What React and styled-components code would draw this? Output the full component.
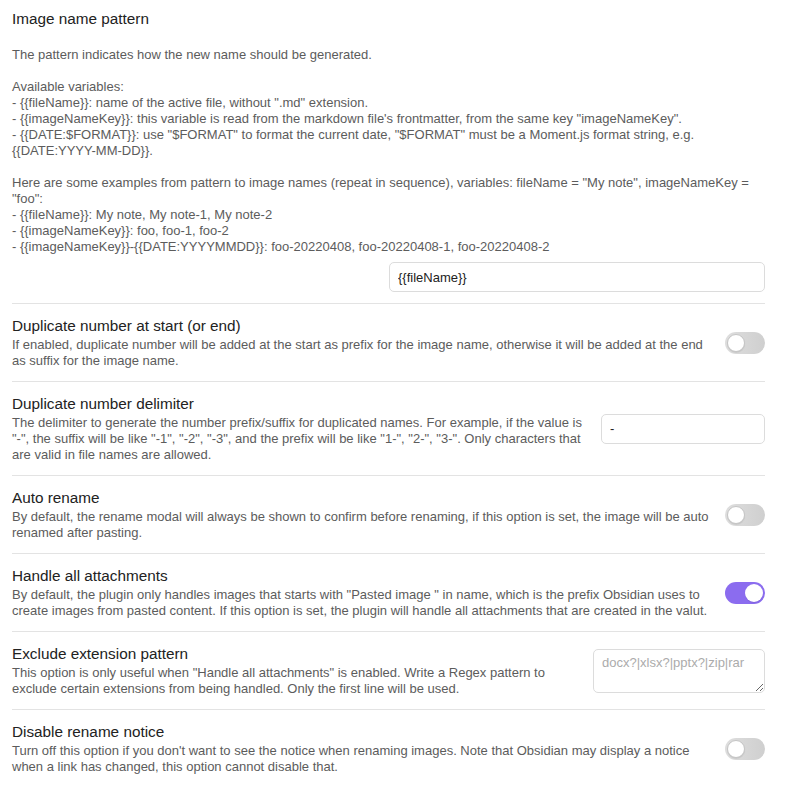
import React from 'react';
import styled, { createGlobalStyle } from 'styled-components';

const GlobalStyle = createGlobalStyle`
    body {
        margin: 0;
        background-color: #FFFFFF;
        font-family: "Liberation Sans", Arial, sans-serif;
        -webkit-font-smoothing: antialiased;
    }
`;

const SettingsPage = styled.div`
    display: flex;
    flex-direction: column;
    padding: 0 21px 0 12px;
`;

const SettingItem = styled.div`
    display: flex;
    flex-direction: ${props => props.$stacked ? 'column' : 'row'};
    align-items: ${props => props.$stacked ? 'stretch' : 'center'};
    padding: ${props => props.$stacked ? '9px 0 11px' : '12px 0'};
    border-top: ${props => props.$first ? 'none' : '1px solid #E3E3E3'};
`;

const SettingInfo = styled.div`
    flex: 1 1 auto;
    min-width: 0;
    margin-right: ${props => props.$stacked ? '0' : '16px'};
`;

const SettingName = styled.div`
    font-size: 15.3px;
    line-height: 19px;
    color: #222222;
`;

const SettingDescription = styled.div`
    padding-top: ${props => props.$stacked ? '3px' : '2px'};
    font-size: 13px;
    line-height: 16px;
    color: #5C5C5C;
    white-space: ${props => props.$stacked ? 'pre-wrap' : 'normal'};
`;

const SettingControl = styled.div`
    display: flex;
    flex-shrink: 0;
    justify-content: flex-end;
    margin-top: ${props => props.$stacked ? '7px' : '0'};
`;

const TextInput = styled.input`
    box-sizing: border-box;
    width: ${props => props.$width};
    height: 30px;
    padding: 0 8px;
    border: 1px solid #DCDCDC;
    border-radius: 5px;
    background-color: #FFFFFF;
    font-family: "Liberation Sans", Arial, sans-serif;
    font-size: 13px;
    color: #222222;
    outline: none;
`;

const TextArea = styled.textarea`
    box-sizing: border-box;
    width: 172px;
    height: 44px;
    padding: 5px 8px;
    border: 1px solid #DCDCDC;
    border-radius: 5px;
    background-color: #FFFFFF;
    font-family: "Liberation Sans", Arial, sans-serif;
    font-size: 13px;
    line-height: 16px;
    color: #222222;
    outline: none;
    resize: both;
    &::placeholder {
        color: #ABABAB;
    }
`;

const ToggleTrack = styled.div`
    position: relative;
    width: 40px;
    height: 22px;
    border-radius: 11px;
    background: ${props => props.$on ? '#8B6CEF' : 'linear-gradient(90deg, #DEDEDE, #CFCFCF)'};
    cursor: pointer;
`;

const ToggleKnob = styled.div`
    position: absolute;
    top: 2px;
    left: ${props => props.$on ? '20px' : '2px'};
    box-sizing: border-box;
    width: 18px;
    height: 18px;
    border-radius: 50%;
    background-color: #FFFFFF;
    border: ${props => props.$on ? 'none' : '1px solid #C4C4C4'};
    box-shadow: 0 1px 1px rgba(0, 0, 0, 0.08);
`;

const Toggle = ({ on = false }) => {
    return <ToggleTrack $on={on}>
        <ToggleKnob $on={on} />
    </ToggleTrack>
}

const patternDescription = `
The pattern indicates how the new name should be generated.

Available variables:
- {{fileName}}: name of the active file, without ".md" extension.
- {{imageNameKey}}: this variable is read from the markdown file's frontmatter, from the same key "imageNameKey".
- {{DATE:$FORMAT}}: use "$FORMAT" to format the current date, "$FORMAT" must be a Moment.js format string, e.g. {{DATE:YYYY-MM-DD}}.

Here are some examples from pattern to image names (repeat in sequence), variables: fileName = "My note", imageNameKey = "foo":
- {{fileName}}: My note, My note-1, My note-2
- {{imageNameKey}}: foo, foo-1, foo-2
- {{imageNameKey}}-{{DATE:YYYYMMDD}}: foo-20220408, foo-20220408-1, foo-20220408-2`;

const Setting = ({ name, description, stacked = false, first = false, children }) => {
    return <SettingItem $stacked={stacked} $first={first}>
        <SettingInfo $stacked={stacked}>
            <SettingName>{name}</SettingName>
            <SettingDescription $stacked={stacked}>{description}</SettingDescription>
        </SettingInfo>
        <SettingControl $stacked={stacked}>{children}</SettingControl>
    </SettingItem>
}

const App = () => {
    return <>
        <GlobalStyle />
        <SettingsPage>
            <Setting name="Image name pattern" description={patternDescription} stacked first>
                <TextInput $width="376px" defaultValue="{{fileName}}" />
            </Setting>
            <Setting
                name="Duplicate number at start (or end)"
                description="If enabled, duplicate number will be added at the start as prefix for the image name, otherwise it will be added at the end as suffix for the image name."
            >
                <Toggle />
            </Setting>
            <Setting
                name="Duplicate number delimiter"
                description={'The delimiter to generate the number prefix/suffix for duplicated names. For example, if the value is "-", the suffix will be like "-1", "-2", "-3", and the prefix will be like "1-", "2-", "3-". Only characters that are valid in file names are allowed.'}
            >
                <TextInput $width="164px" defaultValue="-" />
            </Setting>
            <Setting
                name="Auto rename"
                description="By default, the rename modal will always be shown to confirm before renaming, if this option is set, the image will be auto renamed after pasting."
            >
                <Toggle />
            </Setting>
            <Setting
                name="Handle all attachments"
                description={'By default, the plugin only handles images that starts with "Pasted image " in name, which is the prefix Obsidian uses to create images from pasted content. If this option is set, the plugin will handle all attachments that are created in the valut.'}
            >
                <Toggle on />
            </Setting>
            <Setting
                name="Exclude extension pattern"
                description={'This option is only useful when "Handle all attachments" is enabled. Write a Regex pattern to exclude certain extensions from being handled. Only the first line will be used.'}
            >
                <TextArea placeholder="docx?|xlsx?|pptx?|zip|rar" />
            </Setting>
            <Setting
                name="Disable rename notice"
                description="Turn off this option if you don't want to see the notice when renaming images. Note that Obsidian may display a notice when a link has changed, this option cannot disable that."
            >
                <Toggle />
            </Setting>
        </SettingsPage>
    </>
}

export default App;
